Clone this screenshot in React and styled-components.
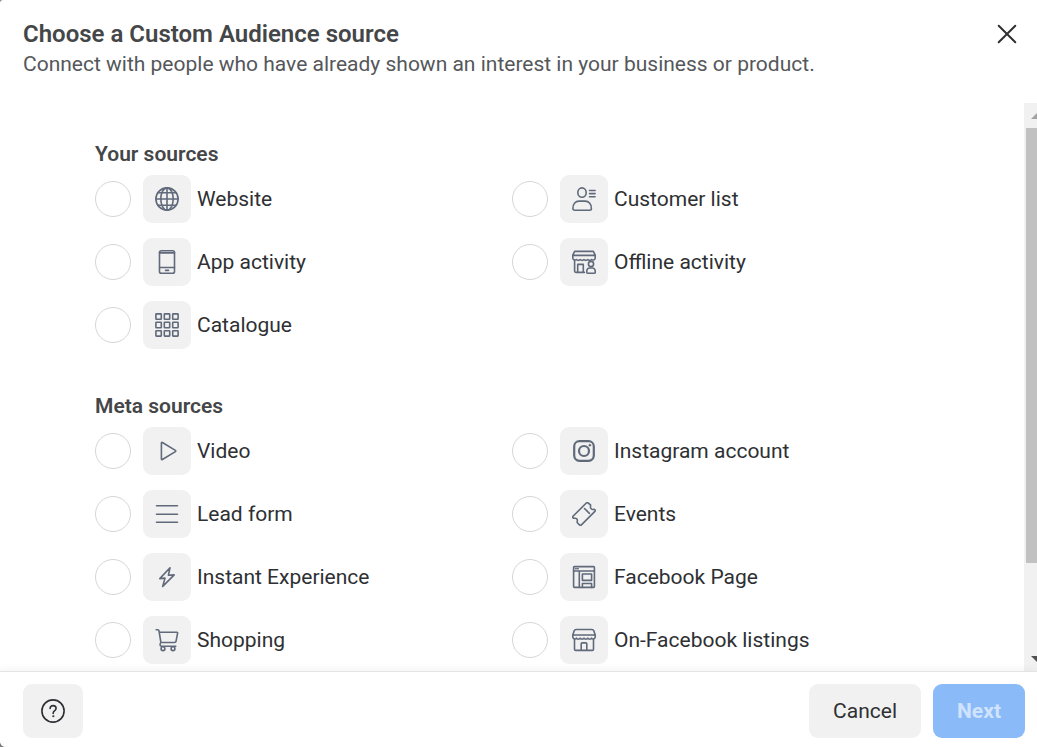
import React, { useState } from 'react';
import styled, { createGlobalStyle } from 'styled-components';

const GlobalStyle = createGlobalStyle`
    *, *::before, *::after {
        box-sizing: border-box;
    }

    body {
        margin: 0;
        background: #7d7d7d;
        font-family: Roboto, "Liberation Sans", sans-serif;
        color: #2e3033;
    }
`

const icons = {
    website: (
        <>
            <circle cx="12" cy="12" r="11.1" />
            <ellipse cx="12" cy="12" rx="6.2" ry="11.1" />
            <path d="M12 .9v22.2M.9 12h22.2M2.8 5.7h18.4M2.8 18.3h18.4" />
        </>
    ),
    app: (
        <>
            <rect x="4.5" y=".8" width="15" height="22.4" rx="1.8" />
            <path d="M4.5 2.9h15M4.5 17.5h15M10.5 20.4h3" />
        </>
    ),
    catalogue: [0.9, 9.3, 17.7].map((y) =>
        [0.9, 9.3, 17.7].map((x) => <rect key={`${x}-${y}`} x={x} y={y} width="5.4" height="5.4" rx=".5" />)
    ),
    customers: (
        <>
            <ellipse cx="10" cy="5.6" rx="4.2" ry="4.7" />
            <path d="M.9 21.5c0-4.6 2.7-7.4 6.1-7.4h6.2c3.4 0 6.2 2.8 6.2 7.4 0 1.1-.7 1.7-1.8 1.7H2.6C1.5 23.2.9 22.6.9 21.5z" />
            <path d="M17.5 3.5h5.6M17.5 6.6h5.6M17.5 9.7h5.6" />
        </>
    ),
    offline: (
        <>
            <path d="M3.2 1.4h17.6a1 1 0 0 1 1 .7l1.4 3.3H.8l1.4-3.3a1 1 0 0 1 1-.7z" />
            <path d="M.8 5.4v2.8a2.2 2.2 0 0 0 3.6 1.3 2.5 2.5 0 0 0 3.8 0 2.5 2.5 0 0 0 3.8 0 2.5 2.5 0 0 0 3.8 0 2.5 2.5 0 0 0 3.8 0 2.2 2.2 0 0 0 3.6-1.3V5.4" />
            <path d="M2.6 10.2v10.9a1.3 1.3 0 0 0 1.3 1.3h8.5M5.7 22.4v-8h5.6v8" />
            <circle cx="19" cy="14" r="2.6" />
            <path d="M14.7 22.2c0-2.4 1.3-4.2 3-4.2h2.6c1.7 0 3 1.8 3 4.2 0 .7-.4 1-1 1h-6.6c-.6 0-1-.3-1-1z" />
        </>
    ),
    video: <path d="M6.4 4.1v15.8c0 .6.5.9 1 .6l13-7.9c.5-.3.5-.9 0-1.2l-13-7.9c-.5-.3-1 0-1 .6z" />,
    form: <path d="M1.5 3.7h21M1.5 12.2h21M1.5 20.3h21" />,
    instant: <path d="M15 2.8 4.8 13.6l5.2-.5-2.3 8.3L19.2 9.9l-5.8.3z" />,
    shopping: (
        <>
            <path d="M1.2 1.7h1.5c.7 0 1.2.4 1.3 1.1l1.9 11.7M4.2 4.3h17.7c.5 0 .8.4.7.9L21 13.4c-.1.7-.7 1.1-1.4 1.1H5.9c-.6.5-.8 1.2-.8 2.1 0 1 .7 1.7 1.7 1.7h14" />
            <circle cx="8" cy="20.7" r="1.9" />
            <circle cx="18" cy="20.7" r="1.9" />
        </>
    ),
    instagram: (
        <>
            <rect x="2.2" y="2.2" width="19.6" height="19.6" rx="5.2" strokeWidth="2.2" />
            <circle cx="12" cy="12" r="5" strokeWidth="2.2" />
            <circle cx="17.8" cy="6.2" r="1" fill="currentColor" strokeWidth=".6" />
        </>
    ),
    events: (
        <>
            <path d="M14.3 1 1 14.3c-.5.5-.4 1.1.1 1.6.3.3.8.4 1.4.4a2.3 2.3 0 0 1 2.9 2.2c0 .6-.3 1-.3 1.5 0 .4.2.7.5 1l1.9 1.9c.6.6 1.3.6 1.9 0L22.9 9.4c.5-.5.5-1.2 0-1.7-.3-.3-.8-.4-1.3-.3a2.6 2.6 0 0 1-3.1-3.1c.2-.6.3-1 0-1.4L16.1 1c-.5-.5-1.200-.5-1.800 0z" />
            <path d="M12.500 6.500l4.900 4.900" />
        </>
    ),
    page: (
        <>
            <rect x="1.6" y="1.6" width="20.8" height="20.8" rx=".8" />
            <path d="M1.6 6h20.8M7.3 6v16.4M3.6 3.8h.6M5.6 3.8h.6" />
            <rect x="10.4" y="9" width="9.2" height="6.4" />
            <path d="M10.4 22.4v-3.900h9.200v3.900" />
        </>
    ),
    listings: (
        <>
            <path d="M4 1.5h16c.8 0 1.4.4 1.7 1.1L23.2 7H.8l1.500-4.400C2.600 1.900 3.200 1.500 4 1.500z" />
            <path d="M.8 7v2.2a2 2 0 0 0 3.6.9 2.2 2.2 0 0 0 3.8 0 2.2 2.2 0 0 0 3.8 0 2.2 2.2 0 0 0 3.8 0 2.2 2.2 0 0 0 3.8 0 2 2 0 0 0 3.6-.9V7" />
            <path d="M2.5 11.2v10c0 .7.5 1.2 1.2 1.2h16.6c.7 0 1.2-.5 1.2-1.2v-10M9.2 22.400v-6.600c0-.5.4-.9.9-.9h3.800c.5 0 .9.4.9.9v6.600" />
        </>
    ),
}

const groups = [
    {
        title: 'Your sources',
        sources: [
            { id: 'website', label: 'Website' },
            { id: 'customers', label: 'Customer list' },
            { id: 'app', label: 'App activity' },
            { id: 'offline', label: 'Offline activity' },
            { id: 'catalogue', label: 'Catalogue' },
        ],
    },
    {
        title: 'Meta sources',
        sources: [
            { id: 'video', label: 'Video' },
            { id: 'instagram', label: 'Instagram account' },
            { id: 'form', label: 'Lead form' },
            { id: 'events', label: 'Events' },
            { id: 'instant', label: 'Instant Experience' },
            { id: 'page', label: 'Facebook Page' },
            { id: 'shopping', label: 'Shopping' },
            { id: 'listings', label: 'On-Facebook listings' },
        ],
    },
]

function Source({ source, checked, onChange }) {
    return (
        <Option>
            <Radio name="source" value={source.id} checked={checked} onChange={onChange} />
            <Tile>
                <Icon viewBox="0 0 24 24" aria-hidden="true">{icons[source.id]}</Icon>
            </Tile>
            <OptionText>{source.label}</OptionText>
        </Option>
    )
}

export default function App() {
    const [selected, setSelected] = useState('')

    return (
        <>
            <GlobalStyle />
            <Dialog role="dialog" aria-labelledby="dialog-title">
                <Header>
                    <div>
                        <Title id="dialog-title">Choose a Custom Audience source</Title>
                        <Subtitle>Connect with people who have already shown an interest in your business or product.</Subtitle>
                    </div>
                    <CloseButton type="button" aria-label="Close">
                        <Icon viewBox="0 0 24 24" aria-hidden="true">
                            <path d="M3.7 3.7l16.6 16.6M20.3 3.7L3.7 20.3" strokeWidth="2" />
                        </Icon>
                    </CloseButton>
                </Header>

                <Body>
                    <Content>
                        {groups.map((group) => (
                            <Group key={group.title}>
                                <GroupTitle>{group.title}</GroupTitle>
                                <Options>
                                    {group.sources.map((source) => (
                                        <Source
                                            key={source.id}
                                            source={source}
                                            checked={selected === source.id}
                                            onChange={(e) => setSelected(e.target.value)}
                                        />
                                    ))}
                                </Options>
                            </Group>
                        ))}
                    </Content>
                    <Scrollbar aria-hidden="true">
                        <Arrow viewBox="0 0 13 25" $color="#a3a3a3"><path d="M7 16l6-6v6z" /></Arrow>
                        <Track><Thumb /></Track>
                        <Arrow viewBox="0 0 13 25" $color="#505050"><path d="M7 10h6v6z" /></Arrow>
                    </Scrollbar>
                </Body>

                <Footer>
                    <HelpButton type="button" aria-label="Help">
                        <Icon viewBox="0 0 24 24" aria-hidden="true">
                            <circle cx="12" cy="12" r="11.1" />
                            <path d="M9.1 9.5c0-1.8 1.2-2.9 3-2.9s3 1.1 3 2.7c0 1.3-.7 1.9-1.6 2.6-.9.6-1.3 1.1-1.3 2.1v.4" />
                            <circle cx="12.2" cy="17.2" r=".7" fill="currentColor" strokeWidth=".6" />
                        </Icon>
                    </HelpButton>
                    <Actions>
                        <CancelButton type="button">Cancel</CancelButton>
                        <NextButton type="button" disabled={!selected}>Next</NextButton>
                    </Actions>
                </Footer>
            </Dialog>
        </>
    )
}

const Dialog = styled.section`
    display: flex;
    flex-direction: column;
    height: 100vh;
    overflow: hidden;
    background: #fff;
    border-radius: 3px 0 0 6px;
`

const Header = styled.header`
    display: flex;
    justify-content: space-between;
    align-items: flex-start;
    padding: 19px 16px 24px 23px;
`

const Title = styled.h1`
    margin: 0;
    font-size: 24px;
    font-weight: 600;
    line-height: 30px;
    color: #444648;
`

const Subtitle = styled.p`
    margin: 0;
    font-size: 21px;
    line-height: 30px;
    color: #55575a;
`

const Icon = styled.svg`
    display: block;
    width: 24px;
    height: 24px;
    fill: none;
    stroke: currentColor;
    stroke-width: 1.6;
    stroke-linecap: round;
    stroke-linejoin: round;
`

const Button = styled.button`
    display: flex;
    align-items: center;
    justify-content: center;
    height: 54px;
    padding: 0 24px;
    border: 0;
    border-radius: 9px;
    background: #f1f1f1;
    color: #2e3033;
    font-family: inherit;
    font-size: 21px;
    cursor: pointer;
`

const CloseButton = styled(Button)`
    height: 30px;
    padding: 0 2px;
    background: none;
`

const HelpButton = styled(Button)`
    padding: 0 18px;
`

const CancelButton = styled(Button)`
    font-weight: 400;
`

const NextButton = styled(Button)`
    background: #1877f2;
    color: #fff;
    font-weight: 700;

    &:disabled {
        background: #8bbaf9;
        color: #d0e3fd;
        cursor: default;
    }
`

const Body = styled.div`
    display: flex;
    flex: 1;
    min-height: 0;
`

const Content = styled.div`
    flex: 1;
    padding: 37px 95px 0;
    overflow: hidden;
`

const Group = styled.fieldset`
    margin: 0 0 43px;
    padding: 0;
    border: 0;
`

const GroupTitle = styled.legend`
    padding: 0 0 7px;
    font-size: 21px;
    font-weight: 600;
    line-height: 28px;
    color: #444648;
`

const Options = styled.div`
    display: grid;
    grid-template-columns: 1fr 1fr;
    row-gap: 15px;
`

const Option = styled.label`
    display: flex;
    align-items: center;
    cursor: pointer;
`

const Radio = styled.input.attrs({ type: 'radio' })`
    appearance: none;
    width: 36px;
    height: 36px;
    margin: 0 12px 0 0;
    border: 1px solid #d5d6d8;
    border-radius: 50%;
    background: #fff;

    &:checked {
        border: 10px solid #1877f2;
    }
`

const Tile = styled.span`
    display: flex;
    align-items: center;
    justify-content: center;
    width: 48px;
    height: 48px;
    border-radius: 9px;
    background: #f1f1f1;
    color: #606a7b;
`

const OptionText = styled.span`
    padding-left: 6px;
    font-size: 21px;
    line-height: 28px;
`

const Scrollbar = styled.div`
    display: flex;
    flex-direction: column;
    width: 13px;
    background: #f1f1f1;
`

const Arrow = styled.svg`
    display: block;
    width: 13px;
    height: 25px;
    fill: ${(props) => props.$color};
`

const Track = styled.div`
    flex: 1;
    padding-left: 2px;
`

const Thumb = styled.div`
    height: 84%;
    background: #c1c1c1;
`

const Footer = styled.footer`
    display: flex;
    align-items: center;
    justify-content: space-between;
    padding: 12px 12px 9px 23px;
    border-top: 1px solid #e4e4e4;
    background: #fff;
    box-shadow: 0 -1px 8px rgba(0, 0, 0, 0.06);
    z-index: 1;
`

const Actions = styled.div`
    display: flex;
    gap: 12px;
`
